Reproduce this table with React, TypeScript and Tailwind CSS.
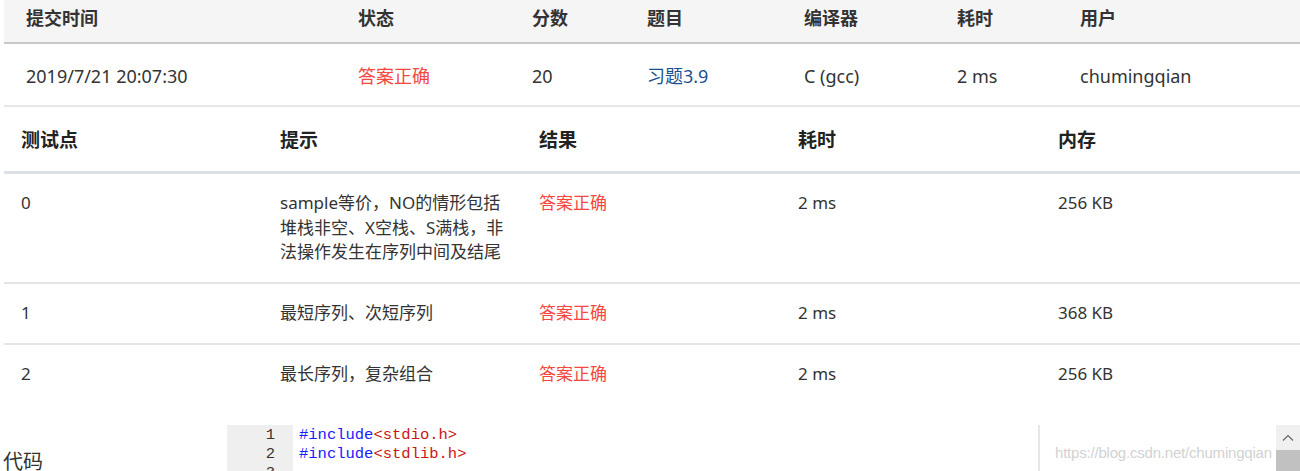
import React from 'react'

const sans = "font-['Noto_Sans','Noto_Sans_CJK_SC',sans-serif]"

const cases = [
    { id: '0', hint: 'sample等价，NO的情形包括堆栈非空、X空栈、S满栈，非法操作发生在序列中间及结尾', time: '2 ms', mem: '256 KB' },
    { id: '1', hint: '最短序列、次短序列', time: '2 ms', mem: '368 KB' },
    { id: '2', hint: '最长序列，复杂组合', time: '2 ms', mem: '256 KB' },
]

function Summary() {
    const heads = ['提交时间', '状态', '分数', '题目', '编译器', '耗时', '用户']
    return (
        <table className="w-full table-fixed border-collapse text-[18px] text-[#333]">
            <colgroup>
                <col className="w-[354px]" />
                <col className="w-[174px]" />
                <col className="w-[115px]" />
                <col className="w-[157px]" />
                <col className="w-[153px]" />
                <col className="w-[123px]" />
                <col />
            </colgroup>
            <thead className="bg-[#f5f5f5]">
                <tr className="border-b-2 border-[#c8c8c8]">
                    {heads.map((h, i) => (
                        <th
                            key={h}
                            className={`h-[43px] pb-[6px] text-left align-middle font-bold leading-[24px] ${i === 0 ? 'pl-[22px]' : ''}`}
                        >
                            {h}
                        </th>
                    ))}
                </tr>
            </thead>
            <tbody>
                <tr className="border-b-2 border-[#e6e7eb] leading-[24px]">
                    <td className="pl-[22px] pt-[20px] pb-[17px]">2019/7/21 20:07:30</td>
                    <td className="pt-[20px] pb-[17px] text-[#f5473e]">答案正确</td>
                    <td className="pt-[20px] pb-[17px]">20</td>
                    <td className="pt-[20px] pb-[17px]">
                        <a href="#" className="text-[#1c4f90]">习题3.9</a>
                    </td>
                    <td className="pt-[20px] pb-[17px]">C (gcc)</td>
                    <td className="pt-[20px] pb-[17px]">2 ms</td>
                    <td className="pt-[20px] pb-[17px]">chumingqian</td>
                </tr>
            </tbody>
        </table>
    )
}

function Cases() {
    return (
        <table className="w-full table-fixed border-collapse text-[#333]">
            <colgroup>
                <col className="w-[276px]" />
                <col className="w-[259px]" />
                <col className="w-[259px]" />
                <col className="w-[260px]" />
                <col />
            </colgroup>
            <thead>
                <tr className="border-b-[3px] border-[#dcdfe6] text-[19px] leading-[26px] text-[#222]">
                    <th className="pl-[17px] pt-[20px] pb-[18px] text-left font-bold">测试点</th>
                    <th className="pt-[20px] pb-[18px] text-left font-bold">提示</th>
                    <th className="pt-[20px] pb-[18px] text-left font-bold">结果</th>
                    <th className="pt-[20px] pb-[18px] text-left font-bold">耗时</th>
                    <th className="pt-[20px] pb-[18px] text-left font-bold">内存</th>
                </tr>
            </thead>
            <tbody className="text-[17px] leading-[24.5px]">
                {cases.map((c, i) => (
                    <tr key={c.id} className={i < cases.length - 1 ? 'border-b-2 border-[#e4e5ea]' : ''}>
                        <td className="pl-[17px] pt-[17px] pb-[17.5px] align-top">{c.id}</td>
                        <td className="pt-[17px] pb-[17.5px] pr-[30px] align-top">{c.hint}</td>
                        <td className="pt-[17px] pb-[17.5px] align-top text-[#f5473e]">答案正确</td>
                        <td className="pt-[17px] pb-[17.5px] align-top">{c.time}</td>
                        <td className="pt-[17px] pb-[17.5px] align-top">{c.mem}</td>
                    </tr>
                ))}
            </tbody>
        </table>
    )
}

function Code() {
    const lines = [
        { kw: '#include', inc: '<stdio.h>' },
        { kw: '#include', inc: '<stdlib.h>' },
        { kw: '', inc: '' },
    ]
    return (
        <div className="relative mt-[21px] flex h-[46px] overflow-hidden">
            <div className="w-[227px] shrink-0 pl-[3px] pt-[23px] text-[20px] leading-[28px] text-[#333]">代码</div>
            <div className="flex w-[811px] shrink-0 font-['Liberation_Mono',monospace] text-[15.5px] leading-[19px]">
                <div className="w-[66px] bg-[#efefef] pt-[1px] pr-[18px] text-right text-[#333]">
                    {lines.map((_, i) => (
                        <div key={i}>{i + 1}</div>
                    ))}
                </div>
                <div className="flex-1 pl-[6px] pt-[1px] whitespace-pre">
                    {lines.map((l, i) => (
                        <div key={i}>
                            <span className="text-[#1a1aff]">{l.kw}</span>
                            <span className="text-[#cc1414]">{l.inc}</span>
                            {!l.kw && ' '}
                        </div>
                    ))}
                </div>
            </div>
            <div className="flex-1 border-l-2 border-[#e6e6e6]" />
            <div className="flex w-[24px] shrink-0 flex-col">
                <div className="flex h-[25px] items-center justify-center bg-[#f0f0f0]">
                    <svg width="12" height="8" viewBox="0 0 12 8" fill="none">
                        <path d="M1 6.5L6 1.5L11 6.5" stroke="#666" strokeWidth="1.2" />
                    </svg>
                </div>
                <div className="flex-1 bg-[#c1c1c1]" />
            </div>
            <div className="pointer-events-none absolute left-[1055px] top-[17px] font-['Liberation_Sans',sans-serif] text-[15px] leading-[22px] tracking-[-0.2px] text-[#d2d2d2]">
                https://blog.csdn.net/chumingqian
            </div>
        </div>
    )
}

export default function App() {
    return (
        <div className={`h-[471px] w-[1300px] overflow-hidden bg-white ${sans}`}>
            <div className="pl-[4px]">
                <Summary />
                <Cases />
            </div>
            <Code />
        </div>
    )
}
